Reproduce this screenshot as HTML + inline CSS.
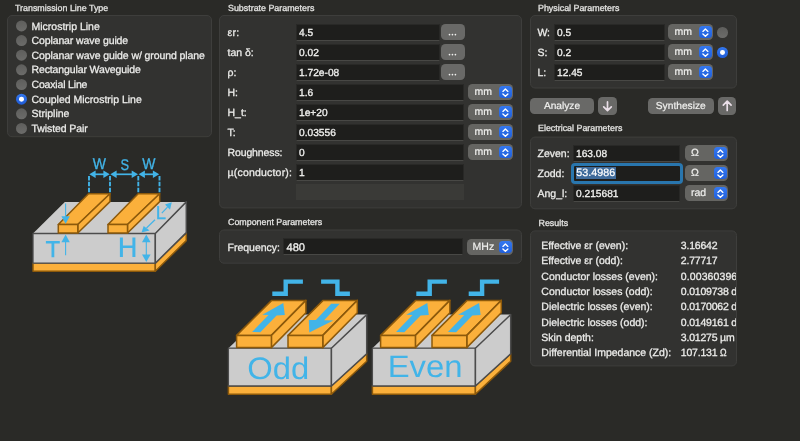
<!DOCTYPE html>
<html>
<head>
<meta charset="utf-8">
<title>Coupled Microstrip Line</title>
<style>
*{box-sizing:border-box;margin:0;padding:0}
html,body{width:800px;height:441px;overflow:hidden;background:#2a2a27;}
body{text-rendering:geometricPrecision;position:relative;font-family:"Liberation Sans",sans-serif;font-size:10.5px;color:#e6e6e4;-webkit-font-smoothing:antialiased}
.abs{position:absolute}
.title{transform:translateY(0.01px);position:absolute;font-size:8.9px;-webkit-text-stroke:0.3px #e2e2e0;color:#e2e2e0;white-space:nowrap;line-height:10px;height:10px}
.lbl{position:absolute;white-space:nowrap;line-height:14px;height:14px;color:#ececea;-webkit-text-stroke:0.28px #ececea;transform:translateY(1px)}
.val{letter-spacing:-0.2px}
.inp{position:absolute;height:17px;background:#1e1e1c;border-top:1px solid #292927;border-bottom:1px solid #484845;border-left:1px solid #282826;border-right:1px solid #282826;line-height:15px;padding-left:2px;white-space:nowrap;overflow:hidden;color:#f1f1ef;-webkit-text-stroke:0.3px #f1f1ef}
.inp b{font-size:10.2px;font-weight:normal;display:inline-block;transform:translateY(1.0px)}
.btn{font-size:10.2px;-webkit-text-stroke:0.2px #f0f0ee;overflow:hidden;position:absolute;background:#696967;border-radius:4.5px;color:#f0f0ee;text-align:center;white-space:nowrap}
.sel{position:absolute;height:16px;width:45px;background:#656562;border-radius:4.5px;line-height:16px;padding-left:6.4px;-webkit-text-stroke:0.2px #efefed;color:#efefed;white-space:nowrap;overflow:hidden}
.sel i{position:absolute;right:1.3px;top:1.6px;width:12.6px;height:12.8px;border-radius:3.5px;background:linear-gradient(#3478f0,#2160dc);display:block}
.sel i svg{position:absolute;left:0;top:0}
.radio{position:absolute;width:10.6px;height:10.6px;border-radius:50%;background:linear-gradient(#5e5e5c,#6c6c6a)}
.radio.on{background:linear-gradient(#3377ee,#1f5bd6)}
.radio.on:after{content:"";position:absolute;left:calc(50% - 2.4px);top:calc(50% - 2.4px);width:4.8px;height:4.8px;border-radius:50%;background:#fff}
</style>
</head>
<body>
<div id="wrap" style="position:absolute;left:0;top:0;width:800px;height:441px;will-change:transform">

<svg class="abs" style="left:0;top:0" width="800" height="441" viewBox="0 0 800 441">
<rect x="7.50" y="15.50" width="204.00" height="121.20" rx="4.5" ry="4.5" fill="#323230" stroke="#3e3e3c" stroke-width="1"/>
<rect x="219.50" y="15.50" width="302.00" height="192.40" rx="4.5" ry="4.5" fill="#323230" stroke="#3e3e3c" stroke-width="1"/>
<rect x="219.50" y="230.00" width="302.00" height="33.20" rx="4.5" ry="4.5" fill="#323230" stroke="#3e3e3c" stroke-width="1"/>
<rect x="530.50" y="15.50" width="206.00" height="72.50" rx="4.5" ry="4.5" fill="#323230" stroke="#3e3e3c" stroke-width="1"/>
<rect x="530.50" y="137.10" width="206.00" height="71.70" rx="4.5" ry="4.5" fill="#323230" stroke="#3e3e3c" stroke-width="1"/>
<rect x="530.50" y="230.90" width="206.00" height="135.00" rx="4.5" ry="4.5" fill="#323230" stroke="#3e3e3c" stroke-width="1"/>
</svg>
<!-- ===== Transmission Line Type ===== -->
<div class="title" style="left:15px;top:2.6px">Transmission Line Type</div>
<span class="radio" style="left:16px;top:20px;width:11px;height:11px;transform:translateY(0.45px)"></span><div class="lbl" style="left:31.5px;top:19px">Microstrip Line</div>
<span class="radio" style="left:16px;top:35px;width:11px;height:11px;transform:translateY(0.09px)"></span><div class="lbl" style="left:31.5px;top:33px;letter-spacing:-0.11px">Coplanar wave guide</div>
<span class="radio" style="left:16px;top:49px;width:11px;height:11px;transform:translateY(0.73px)"></span><div class="lbl" style="left:31.5px;top:48px;letter-spacing:-0.083px">Coplanar wave guide w/ ground plane</div>
<span class="radio" style="left:16px;top:64px;width:11px;height:11px;transform:translateY(0.37px)"></span><div class="lbl" style="left:31.5px;top:62px;letter-spacing:-0.12px">Rectangular Waveguide</div>
<span class="radio" style="left:16px;top:79px;width:11px;height:11px;transform:translateY(0.01px)"></span><div class="lbl" style="left:31.5px;top:77px;letter-spacing:-0.17px">Coaxial Line</div>
<span class="radio on" style="left:16px;top:93px;width:11px;height:11px;transform:translateY(0.65px)"></span><div class="lbl" style="left:31.5px;top:92px">Coupled Microstrip Line</div>
<span class="radio" style="left:16px;top:108px;width:11px;height:11px;transform:translateY(0.29px)"></span><div class="lbl" style="left:31.5px;top:106px">Stripline</div>
<span class="radio" style="left:16px;top:122px;width:11px;height:11px;transform:translateY(0.93px)"></span><div class="lbl" style="left:31.5px;top:121px;letter-spacing:-0.09px">Twisted Pair</div>

<!-- ===== Substrate Parameters ===== -->
<div class="title" style="left:228px;top:2.6px">Substrate Parameters</div>

<div class="lbl" style="left:227.5px;top:25px;letter-spacing:0.3px">εr:</div>
<div class="inp" style="left:296px;top:24px;width:144px"><b>4.5</b></div>
<div class="btn" style="left:441px;top:24px;width:24px;height:16px;"><svg width="24" height="16" viewBox="0 0 24 16" style="position:absolute;left:0;top:0"><circle cx="8.5" cy="10.6" r="0.85" fill="#f0f0ee"/><circle cx="11.45" cy="10.6" r="0.85" fill="#f0f0ee"/><circle cx="14.4" cy="10.6" r="0.85" fill="#f0f0ee"/></svg></div>

<div class="lbl" style="left:227.5px;top:45px">tan δ:</div>
<div class="inp" style="left:296px;top:44px;width:144px"><b>0.02</b></div>
<div class="btn" style="left:441px;top:44px;width:24px;height:16px;"><svg width="24" height="16" viewBox="0 0 24 16" style="position:absolute;left:0;top:0"><circle cx="8.5" cy="10.6" r="0.85" fill="#f0f0ee"/><circle cx="11.45" cy="10.6" r="0.85" fill="#f0f0ee"/><circle cx="14.4" cy="10.6" r="0.85" fill="#f0f0ee"/></svg></div>

<div class="lbl" style="left:227.5px;top:65px">ρ:</div>
<div class="inp" style="left:296px;top:64px;width:144px"><b>1.72e-08</b></div>
<div class="btn" style="left:441px;top:64px;width:24px;height:16px;"><svg width="24" height="16" viewBox="0 0 24 16" style="position:absolute;left:0;top:0"><circle cx="8.5" cy="10.6" r="0.85" fill="#f0f0ee"/><circle cx="11.45" cy="10.6" r="0.85" fill="#f0f0ee"/><circle cx="14.4" cy="10.6" r="0.85" fill="#f0f0ee"/></svg></div>

<div class="lbl" style="left:227.5px;top:85px">H:</div>
<div class="inp" style="left:296px;top:84px;width:168px"><b>1.6</b></div>
<div class="sel" style="left:468px;top:84px">mm<i><svg width="12.6" height="12.8" viewBox="0 0 12.6 12.8"><path d="M3.9 5.4 L6.4 3.0 L8.9 5.4 M3.9 7.9 L6.4 10.3 L8.9 7.9" fill="none" stroke="#fff" stroke-width="1.35" stroke-linecap="round" stroke-linejoin="round"/></svg></i></div>

<div class="lbl" style="left:227.5px;top:105px">H_t:</div>
<div class="inp" style="left:296px;top:104px;width:168px"><b>1e+20</b></div>
<div class="sel" style="left:468px;top:104px">mm<i><svg width="12.6" height="12.8" viewBox="0 0 12.6 12.8"><path d="M3.9 5.4 L6.4 3.0 L8.9 5.4 M3.9 7.9 L6.4 10.3 L8.9 7.9" fill="none" stroke="#fff" stroke-width="1.35" stroke-linecap="round" stroke-linejoin="round"/></svg></i></div>

<div class="lbl" style="left:227.5px;top:125px">T:</div>
<div class="inp" style="left:296px;top:124px;width:168px"><b>0.03556</b></div>
<div class="sel" style="left:468px;top:124px">mm<i><svg width="12.6" height="12.8" viewBox="0 0 12.6 12.8"><path d="M3.9 5.4 L6.4 3.0 L8.9 5.4 M3.9 7.9 L6.4 10.3 L8.9 7.9" fill="none" stroke="#fff" stroke-width="1.35" stroke-linecap="round" stroke-linejoin="round"/></svg></i></div>

<div class="lbl" style="left:227.5px;top:145px;letter-spacing:-0.12px">Roughness:</div>
<div class="inp" style="left:296px;top:144px;width:168px"><b>0</b></div>
<div class="sel" style="left:468px;top:144px">mm<i><svg width="12.6" height="12.8" viewBox="0 0 12.6 12.8"><path d="M3.9 5.4 L6.4 3.0 L8.9 5.4 M3.9 7.9 L6.4 10.3 L8.9 7.9" fill="none" stroke="#fff" stroke-width="1.35" stroke-linecap="round" stroke-linejoin="round"/></svg></i></div>

<div class="lbl" style="left:227.5px;top:165px;letter-spacing:0.2px">µ(conductor):</div>
<div class="inp" style="left:296px;top:164px;width:168px"><b>1</b></div>

<div class="abs" style="left:296px;top:184px;width:168px;height:16px;background:#3a3a37"></div>

<!-- ===== Component Parameters ===== -->
<div class="title" style="left:228px;top:217px">Component Parameters</div>
<div class="lbl" style="left:227.5px;top:240px">Frequency:</div>
<div class="inp" style="left:283px;top:238px;width:180px;padding-left:2.5px"><b style="font-size:11.1px;transform:translateY(2px)">480</b></div>
<div class="sel" style="left:467px;top:239px;width:46px;padding-left:5.6px">MHz<i><svg width="12.6" height="12.8" viewBox="0 0 12.6 12.8"><path d="M3.9 5.4 L6.4 3.0 L8.9 5.4 M3.9 7.9 L6.4 10.3 L8.9 7.9" fill="none" stroke="#fff" stroke-width="1.35" stroke-linecap="round" stroke-linejoin="round"/></svg></i></div>

<!-- ===== Physical Parameters ===== -->
<div class="title" style="left:538px;top:2.6px">Physical Parameters</div>

<div class="lbl" style="left:537.5px;top:25px;letter-spacing:-0.3px">W:</div>
<div class="inp" style="left:554px;top:24px;width:111px"><b>0.5</b></div>
<div class="sel" style="left:668px;top:24px">mm<i><svg width="12.6" height="12.8" viewBox="0 0 12.6 12.8"><path d="M3.9 5.4 L6.4 3.0 L8.9 5.4 M3.9 7.9 L6.4 10.3 L8.9 7.9" fill="none" stroke="#fff" stroke-width="1.35" stroke-linecap="round" stroke-linejoin="round"/></svg></i></div>
<span class="radio" style="left:717px;top:27px"></span>

<div class="lbl" style="left:537.5px;top:45px">S:</div>
<div class="inp" style="left:554px;top:44px;width:111px"><b>0.2</b></div>
<div class="sel" style="left:668px;top:44px">mm<i><svg width="12.6" height="12.8" viewBox="0 0 12.6 12.8"><path d="M3.9 5.4 L6.4 3.0 L8.9 5.4 M3.9 7.9 L6.4 10.3 L8.9 7.9" fill="none" stroke="#fff" stroke-width="1.35" stroke-linecap="round" stroke-linejoin="round"/></svg></i></div>
<span class="radio on" style="left:717px;top:47px"></span>

<div class="lbl" style="left:537.5px;top:65px">L:</div>
<div class="inp" style="left:554px;top:64px;width:111px"><b>12.45</b></div>
<div class="sel" style="left:668px;top:64px">mm<i><svg width="12.6" height="12.8" viewBox="0 0 12.6 12.8"><path d="M3.9 5.4 L6.4 3.0 L8.9 5.4 M3.9 7.9 L6.4 10.3 L8.9 7.9" fill="none" stroke="#fff" stroke-width="1.35" stroke-linecap="round" stroke-linejoin="round"/></svg></i></div>

<!-- buttons -->
<div class="btn" style="left:530px;top:98px;width:64px;height:16px;line-height:18px">Analyze</div>
<div class="btn" style="left:598px;top:97px;width:19px;height:18px"><svg width="19" height="18" viewBox="0 0 19 18"><path d="M9.5 4.9 V13.4 M5.7 9.8 L9.5 13.6 L13.3 9.8" fill="none" stroke="#eadfe8" stroke-width="1.7" stroke-linecap="round" stroke-linejoin="round"/></svg></div>
<div class="btn" style="left:647.5px;top:98px;width:66.5px;height:16px;line-height:18px">Synthesize</div>
<div class="btn" style="left:717.8px;top:97px;width:18.4px;height:18px"><svg width="19" height="18" viewBox="0 0 19 18"><path d="M9.2 13.5 V4.4 M5.3 8.1 L9.2 4.2 L13.1 8.1" fill="none" stroke="#eadfe8" stroke-width="1.7" stroke-linecap="round" stroke-linejoin="round"/></svg></div>

<!-- ===== Electrical Parameters ===== -->
<div class="title" style="left:538px;top:123px">Electrical Parameters</div>

<div class="lbl" style="left:537.5px;top:146px">Zeven:</div>
<div class="inp" style="left:573px;top:145px;width:107px"><b>163.08</b></div>
<div class="sel" style="left:685px;top:145px;width:43px;padding-left:6px">Ω<i><svg width="12.6" height="12.8" viewBox="0 0 12.6 12.8"><path d="M3.9 5.4 L6.4 3.0 L8.9 5.4 M3.9 7.9 L6.4 10.3 L8.9 7.9" fill="none" stroke="#fff" stroke-width="1.35" stroke-linecap="round" stroke-linejoin="round"/></svg></i></div>

<div class="lbl" style="left:537.5px;top:166px">Zodd:</div>
<div class="abs" style="left:571px;top:163px;width:111.6px;height:21px;border-radius:4px;background:#2976ae"></div>
<div class="abs" style="left:574px;top:166px;width:105.6px;height:14.7px;border-radius:1px;background:#1e1e1c"></div>
<div class="abs" style="left:576px;top:166.6px;width:40.2px;height:12.5px;background:#3f6b9b"></div>
<div class="abs" style="left:576.3px;top:166px;height:14px;line-height:14px;font-size:10.75px;color:#fff;-webkit-text-stroke:0.22px #fff;white-space:nowrap;transform:translateY(-0.1px)">53.4986</div>
<div class="sel" style="left:685px;top:165px;width:43px;padding-left:6px">Ω<i><svg width="12.6" height="12.8" viewBox="0 0 12.6 12.8"><path d="M3.9 5.4 L6.4 3.0 L8.9 5.4 M3.9 7.9 L6.4 10.3 L8.9 7.9" fill="none" stroke="#fff" stroke-width="1.35" stroke-linecap="round" stroke-linejoin="round"/></svg></i></div>

<div class="lbl" style="left:537.5px;top:186px">Ang_l:</div>
<div class="inp" style="left:573px;top:185px;width:107px"><b>0.215681</b></div>
<div class="sel" style="left:685px;top:185px;width:43px;padding-left:6px">rad<i><svg width="12.6" height="12.8" viewBox="0 0 12.6 12.8"><path d="M3.9 5.4 L6.4 3.0 L8.9 5.4 M3.9 7.9 L6.4 10.3 L8.9 7.9" fill="none" stroke="#fff" stroke-width="1.35" stroke-linecap="round" stroke-linejoin="round"/></svg></i></div>

<!-- ===== Results ===== -->
<div class="title" style="left:538.5px;top:217.5px">Results</div>
<div class="abs" style="left:531px;top:231.5px;width:205px;height:134px;overflow:hidden">
  <div id="res" style="position:absolute;left:-531px;top:-231.5px;width:800px;height:441px">
  <div class="lbl" style="left:541.3px;top:239px;transform:translateY(0px)">Effective εr (even):</div><div class="lbl val" style="left:680.8px;top:239px;transform:translateY(0px)">3.16642</div>
  <div class="lbl" style="left:541.3px;top:254px;transform:translateY(0px)">Effective εr (odd):</div><div class="lbl val" style="left:680.8px;top:254px;transform:translateY(0px)">2.77717</div>
  <div class="lbl" style="left:541.3px;top:270px;transform:translateY(0px)">Conductor losses (even):</div><div class="lbl val" style="left:680.8px;top:270px;transform:translateY(0px);letter-spacing:0.1px">0.00360396 dB</div>
  <div class="lbl" style="left:541.3px;top:285px;transform:translateY(0px)">Conductor losses (odd):</div><div class="lbl val" style="left:680.8px;top:285px;transform:translateY(0px)">0.0109738 dB</div>
  <div class="lbl" style="left:541.3px;top:300px;transform:translateY(0px)">Dielectric losses (even):</div><div class="lbl val" style="left:680.8px;top:300px;transform:translateY(0px)">0.0170062 dB</div>
  <div class="lbl" style="left:541.3px;top:316px;transform:translateY(0px)">Dielectric losses (odd):</div><div class="lbl val" style="left:680.8px;top:316px;transform:translateY(0px)">0.0149161 dB</div>
  <div class="lbl" style="left:541.3px;top:331px;transform:translateY(0px)">Skin depth:</div><div class="lbl val" style="left:680.8px;top:331px;transform:translateY(0px)">3.01275 µm</div>
  <div class="lbl" style="left:541.3px;top:346px;transform:translateY(0px)">Differential Impedance (Zd):</div><div class="lbl val" style="left:680.8px;top:346px;transform:translateY(0px)">107.131 <span style="display:inline-block;transform:scaleX(0.84);transform-origin:0 50%">Ω</span></div>
  </div>
</div>

<!-- ===== Diagrams (placeholders) ===== -->
<svg id="diag1" class="abs" style="left:20px;top:150px" width="180" height="135" viewBox="20 150 180 135">
<polygon points="33.0,263.2 155.3,263.2 155.3,271.2 33.0,271.2" fill="#fbb03b" stroke="#8c590b" stroke-width="1.5" stroke-linejoin="round"/>
<polygon points="155.3,263.2 186.3,232.6 186.3,240.6 155.3,271.2" fill="#fbb03b" stroke="#8c590b" stroke-width="1.5" stroke-linejoin="round"/>
<polygon points="33.0,233.5 155.3,233.5 186.3,201.9 64.8,201.9" fill="#cccccc" stroke="none" stroke-width="1.5" stroke-linejoin="round"/>
<polygon points="33.0,233.5 155.3,233.5 155.3,263.2 33.0,263.2" fill="#cccccc" stroke="#4c4c4c" stroke-width="1.3" stroke-linejoin="round"/>
<polygon points="155.3,233.5 186.3,201.9 186.3,232.6 155.3,263.2" fill="#cccccc" stroke="#4c4c4c" stroke-width="1.5" stroke-linejoin="round"/>
<polygon points="58.3,224.5 77.8,224.5 110.0,193.7 88.5,193.7" fill="#fbb03b" stroke="#8c590b" stroke-width="1.5" stroke-linejoin="round"/>
<polygon points="77.8,224.5 110.0,193.7 110.0,201.6 77.8,233.0" fill="#fbb03b" stroke="#8c590b" stroke-width="1.5" stroke-linejoin="round"/>
<polygon points="58.3,224.5 77.8,224.5 77.8,233.0 58.3,233.0" fill="#fbb03b" stroke="#8c590b" stroke-width="1.5" stroke-linejoin="round"/>
<polygon points="108.0,224.5 127.5,224.5 159.7,193.7 138.2,193.7" fill="#fbb03b" stroke="#8c590b" stroke-width="1.5" stroke-linejoin="round"/>
<polygon points="127.5,224.5 159.7,193.7 159.7,201.6 127.5,233.0" fill="#fbb03b" stroke="#8c590b" stroke-width="1.5" stroke-linejoin="round"/>
<polygon points="108.0,224.5 127.5,224.5 127.5,233.0 108.0,233.0" fill="#fbb03b" stroke="#8c590b" stroke-width="1.5" stroke-linejoin="round"/>
<line x1="89.0" y1="175.9" x2="89.0" y2="193.2" stroke="#42b4e8" stroke-width="1.9" stroke-dasharray="4.5 1.4"/>
<line x1="110.0" y1="175.9" x2="110.0" y2="193.2" stroke="#42b4e8" stroke-width="1.9" stroke-dasharray="4.5 1.4"/>
<line x1="138.3" y1="175.9" x2="138.3" y2="193.2" stroke="#42b4e8" stroke-width="1.9" stroke-dasharray="4.5 1.4"/>
<line x1="159.5" y1="175.9" x2="159.5" y2="193.2" stroke="#42b4e8" stroke-width="1.9" stroke-dasharray="4.5 1.4"/>
<line x1="94.6" y1="174.3" x2="104.4" y2="174.3" stroke="#42b4e8" stroke-width="1.7"/><polygon points="89.3,174.3 95.6,170.6 95.6,178.0" fill="#42b4e8"/><polygon points="109.7,174.3 103.4,170.6 103.4,178.0" fill="#42b4e8"/>
<line x1="115.6" y1="174.3" x2="132.7" y2="174.3" stroke="#42b4e8" stroke-width="1.7"/><polygon points="110.3,174.3 116.6,170.6 116.6,178.0" fill="#42b4e8"/><polygon points="138.0,174.3 131.7,170.6 131.7,178.0" fill="#42b4e8"/>
<line x1="143.9" y1="174.3" x2="153.9" y2="174.3" stroke="#42b4e8" stroke-width="1.7"/><polygon points="138.6,174.3 144.9,170.6 144.9,178.0" fill="#42b4e8"/><polygon points="159.2,174.3 152.9,170.6 152.9,178.0" fill="#42b4e8"/>
<text x="92.8" y="169.1" font-family="Liberation Sans, sans-serif" font-size="15.5" fill="#42b4e8" stroke="#42b4e8" stroke-width="0.30" text-anchor="start" textLength="13.2" lengthAdjust="spacingAndGlyphs">W</text>
<text x="120.4" y="170.3" font-family="Liberation Sans, sans-serif" font-size="15.5" fill="#42b4e8" stroke="#42b4e8" stroke-width="0.30" text-anchor="start" textLength="8.6" lengthAdjust="spacingAndGlyphs">S</text>
<text x="142.2" y="169.1" font-family="Liberation Sans, sans-serif" font-size="15.5" fill="#42b4e8" stroke="#42b4e8" stroke-width="0.30" text-anchor="start" textLength="13.2" lengthAdjust="spacingAndGlyphs">W</text>
<line x1="146.5" y1="228.0" x2="155.0" y2="219.8" stroke="#42b4e8" stroke-width="1.2"/>
<line x1="161.8" y1="213.1" x2="167.5" y2="207.2" stroke="#42b4e8" stroke-width="1.2"/>
<polygon points="141.5,232.4 143.7,226.0 149.6,230.6" fill="#42b4e8"/>
<polygon points="171.8,202.2 165.0,204.4 170.0,209.8" fill="#42b4e8"/>
<text x="155.8" y="218.8" font-family="Liberation Sans, sans-serif" font-size="18.5" fill="#42b4e8" stroke="#42b4e8" stroke-width="0.30" text-anchor="start">L</text>
<path d="M45.9 241.1 H59.8 V243.4 H54.3 V257.2 H51.5 V243.4 H45.9 Z" fill="#42b4e8"/>
<line x1="65.6" y1="203.6" x2="65.6" y2="217" stroke="#42b4e8" stroke-width="1.1"/>
<polygon points="65.6,223.8 61.4,216.2 69.8,216.2" fill="#42b4e8"/>
<line x1="65.6" y1="241.5" x2="65.6" y2="255.2" stroke="#42b4e8" stroke-width="1.1"/>
<polygon points="65.6,234.6 61.4,242.2 69.8,242.2" fill="#42b4e8"/>
<path d="M119.9 237.4 H122.9 V245.5 H132.4 V237.4 H135.4 V256.9 H132.4 V248.0 H122.9 V256.9 H119.9 Z" fill="#42b4e8"/>
<line x1="146.3" y1="241" x2="146.3" y2="256" stroke="#42b4e8" stroke-width="1.1"/>
<polygon points="146.3,234.6 142.0,242.2 150.6,242.2" fill="#42b4e8"/>
<polygon points="146.3,262.0 142.0,254.4 150.6,254.4" fill="#42b4e8"/>
</svg>
<svg id="diag2" class="abs" style="left:220px;top:270px" width="300" height="130" viewBox="220 270 300 130">
<polygon points="228.4,386.0 331.4,386.0 331.4,394.2 228.4,394.2" fill="#fbb03b" stroke="#8c590b" stroke-width="1.5" stroke-linejoin="round"/>
<polygon points="331.4,386.0 366.7,353.8 366.7,361.2 331.4,394.2" fill="#fbb03b" stroke="#8c590b" stroke-width="1.5" stroke-linejoin="round"/>
<polygon points="228.4,348.2 331.4,348.2 366.7,314.6 263.7,314.6" fill="#cccccc" stroke="none" stroke-width="1.5" stroke-linejoin="round"/>
<polygon points="228.4,348.2 331.4,348.2 331.4,386.0 228.4,386.0" fill="#cccccc" stroke="#4c4c4c" stroke-width="1.3" stroke-linejoin="round"/>
<polygon points="331.4,348.2 366.7,314.6 366.7,353.8 331.4,386.0" fill="#cccccc" stroke="#4c4c4c" stroke-width="1.5" stroke-linejoin="round"/>
<polygon points="236.6,335.4 271.4,335.4 305.9,300.4 271.7,300.4" fill="#fbb03b" stroke="#8c590b" stroke-width="1.5" stroke-linejoin="round"/>
<polygon points="271.4,335.4 305.9,300.4 305.9,312.8 271.4,347.6" fill="#fbb03b" stroke="#8c590b" stroke-width="1.5" stroke-linejoin="round"/>
<polygon points="236.6,335.4 271.4,335.4 271.4,347.6 236.6,347.6" fill="#fbb03b" stroke="#8c590b" stroke-width="1.5" stroke-linejoin="round"/>
<polygon points="288.0,335.4 322.8,335.4 357.3,300.4 323.1,300.4" fill="#fbb03b" stroke="#8c590b" stroke-width="1.5" stroke-linejoin="round"/>
<polygon points="322.8,335.4 357.3,300.4 357.3,312.8 322.8,347.6" fill="#fbb03b" stroke="#8c590b" stroke-width="1.5" stroke-linejoin="round"/>
<polygon points="288.0,335.4 322.8,335.4 322.8,347.6 288.0,347.6" fill="#fbb03b" stroke="#8c590b" stroke-width="1.5" stroke-linejoin="round"/>
<polygon points="283.3,303.0 284.8,315.0 276.6,315.4 260.3,332.2 252.1,332.0 268.5,315.0 262.3,314.7" fill="#42b4e8"/>
<polygon points="331.2,303.7 339.7,303.7 324.1,320.3 333.3,320.5 309.3,332.4 308.8,320.0 315.9,320.0" fill="#42b4e8"/>
<polyline points="321.1,281.6 337.4,281.6 337.4,293.7 349.9,293.7" fill="none" stroke="#42b4e8" stroke-width="4.4"/>
<polyline points="272.3,293.7 285.7,293.7 285.7,281.6 302.9,281.6" fill="none" stroke="#42b4e8" stroke-width="4.4"/>
<text x="247.3" y="378.6" font-family="Liberation Sans, sans-serif" font-size="31.0" fill="#42b4e8" stroke="#42b4e8" stroke-width="0.00" text-anchor="start" textLength="62.0" lengthAdjust="spacingAndGlyphs">Odd</text>
<polygon points="372.4,386.0 475.4,386.0 475.4,394.2 372.4,394.2" fill="#fbb03b" stroke="#8c590b" stroke-width="1.5" stroke-linejoin="round"/>
<polygon points="475.4,386.0 510.7,353.8 510.7,361.2 475.4,394.2" fill="#fbb03b" stroke="#8c590b" stroke-width="1.5" stroke-linejoin="round"/>
<polygon points="372.4,348.2 475.4,348.2 510.7,314.6 407.7,314.6" fill="#cccccc" stroke="none" stroke-width="1.5" stroke-linejoin="round"/>
<polygon points="372.4,348.2 475.4,348.2 475.4,386.0 372.4,386.0" fill="#cccccc" stroke="#4c4c4c" stroke-width="1.3" stroke-linejoin="round"/>
<polygon points="475.4,348.2 510.7,314.6 510.7,353.8 475.4,386.0" fill="#cccccc" stroke="#4c4c4c" stroke-width="1.5" stroke-linejoin="round"/>
<polygon points="380.6,335.4 415.4,335.4 449.9,300.4 415.7,300.4" fill="#fbb03b" stroke="#8c590b" stroke-width="1.5" stroke-linejoin="round"/>
<polygon points="415.4,335.4 449.9,300.4 449.9,312.8 415.4,347.6" fill="#fbb03b" stroke="#8c590b" stroke-width="1.5" stroke-linejoin="round"/>
<polygon points="380.6,335.4 415.4,335.4 415.4,347.6 380.6,347.6" fill="#fbb03b" stroke="#8c590b" stroke-width="1.5" stroke-linejoin="round"/>
<polygon points="432.0,335.4 466.8,335.4 501.3,300.4 467.1,300.4" fill="#fbb03b" stroke="#8c590b" stroke-width="1.5" stroke-linejoin="round"/>
<polygon points="466.8,335.4 501.3,300.4 501.3,312.8 466.8,347.6" fill="#fbb03b" stroke="#8c590b" stroke-width="1.5" stroke-linejoin="round"/>
<polygon points="432.0,335.4 466.8,335.4 466.8,347.6 432.0,347.6" fill="#fbb03b" stroke="#8c590b" stroke-width="1.5" stroke-linejoin="round"/>
<polygon points="427.3,303.0 428.8,315.0 420.6,315.4 404.3,332.2 396.1,332.0 412.5,315.0 406.3,314.7" fill="#42b4e8"/>
<polygon points="479.1,303.0 480.6,315.0 472.4,315.4 456.1,332.2 447.9,332.0 464.3,315.0 458.1,314.7" fill="#42b4e8"/>
<polyline points="468.7,293.7 482.1,293.7 482.1,281.6 499.1,281.6" fill="none" stroke="#42b4e8" stroke-width="4.4"/>
<polyline points="416.3,293.7 429.7,293.7 429.7,281.6 446.9,281.6" fill="none" stroke="#42b4e8" stroke-width="4.4"/>
<text x="387.7" y="376.5" font-family="Liberation Sans, sans-serif" font-size="31.0" fill="#42b4e8" stroke="#42b4e8" stroke-width="0.00" text-anchor="start" textLength="74.9" lengthAdjust="spacingAndGlyphs">Even</text>
</svg>

</div>
</body>
</html>
